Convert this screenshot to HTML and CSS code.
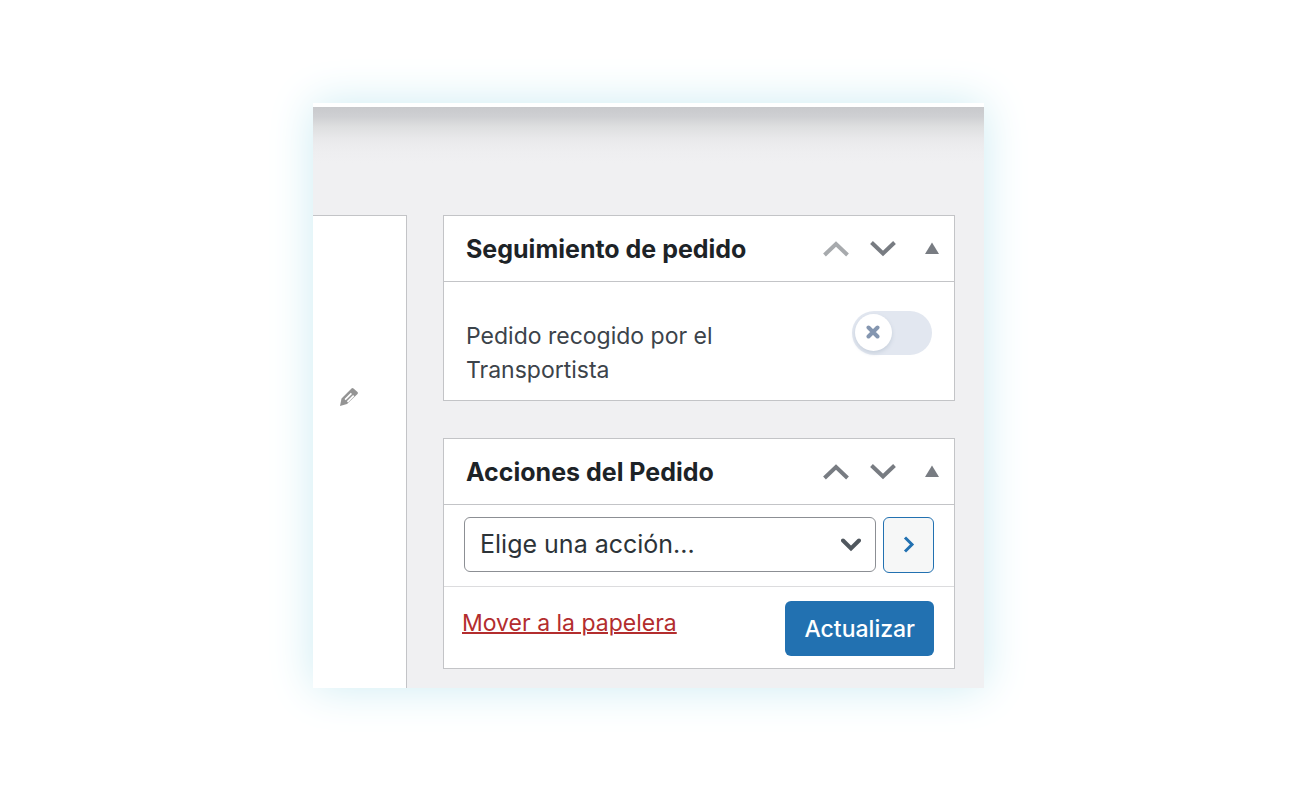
FILE: index.html
```html
<!DOCTYPE html>
<html lang="es">
<head>
<meta charset="utf-8">
<meta name="viewport" content="width=device-width, initial-scale=1">
<title>Pedido</title>
<link rel="stylesheet" href="styles.css">
</head>
<body>
<main class="frame">
  <div class="topbar"></div>
  <div class="columns">
    <section class="details" aria-label="Detalles">
      <button class="edit" type="button" aria-label="Editar">
        <svg width="20" height="20" viewBox="0 0 20 20"><path fill="#949494" fill-rule="evenodd" d="M12.500 1.500Q13.500 .5 14.500 1.500L18.500 5Q19.500 6 18.500 7L8 17L1 19L2.500 11.500ZM11.800 5.700L5.500 12L6.700 13.200L13 6.900ZM14.100 8L7.800 14.300L9 15.500L15.300 9.200Z"/></svg>
      </button>
    </section>
    <aside class="sidebar">
      <section class="panel">
        <header class="panel-header">
          <h2 class="title">Seguimiento de pedido</h2>
          <div class="tools">
            <button class="tool" type="button" aria-label="Subir" disabled><svg width="26" height="16" viewBox="0 0 26 16"><path class="arrow" d="M1.500 14L13 3L24.500 14"/></svg></button>
            <button class="tool" type="button" aria-label="Bajar"><svg width="26" height="16" viewBox="0 0 26 16"><path class="arrow" d="M1.500 1.500L13 12.500L24.500 1.500"/></svg></button>
            <button class="tool toggle" type="button" aria-label="Plegar"><svg width="14" height="14" viewBox="0 0 14 14"><path fill="#787c82" d="M7 .5L14 12H0Z"/></svg></button>
          </div>
        </header>
        <div class="tracking">
          <label class="tracking-label" for="picked">Pedido recogido por el Transportista</label>
          <div class="switch">
            <input class="switch-input" type="checkbox" id="picked">
            <svg class="switch-mark" width="14" height="14" viewBox="0 0 14 14"><path d="M2.500 2.500L11.500 11.500M11.500 2.500L2.500 11.500"/></svg>
          </div>
        </div>
      </section>
      <section class="panel">
        <header class="panel-header">
          <h2 class="title">Acciones del Pedido</h2>
          <div class="tools">
            <button class="tool" type="button" aria-label="Subir"><svg width="26" height="16" viewBox="0 0 26 16"><path class="arrow" d="M1.500 14L13 3L24.500 14"/></svg></button>
            <button class="tool" type="button" aria-label="Bajar"><svg width="26" height="16" viewBox="0 0 26 16"><path class="arrow" d="M1.500 1.500L13 12.500L24.500 1.500"/></svg></button>
            <button class="tool toggle" type="button" aria-label="Plegar"><svg width="14" height="14" viewBox="0 0 14 14"><path fill="#787c82" d="M7 .5L14 12H0Z"/></svg></button>
          </div>
        </header>
        <div class="actions">
          <div class="picker">
            <select class="select" aria-label="Acción"><option>Elige una acción...</option></select>
            <svg class="caret" width="20" height="14" viewBox="0 0 20 14"><path d="M2 2.500L10 10.500L18 2.500"/></svg>
          </div>
          <button class="go" type="button" aria-label="Aplicar"><svg width="12" height="18" viewBox="0 0 12 18"><path d="M2 1.500L9 8.500L2 15.500"/></svg></button>
        </div>
        <footer class="footer">
          <a class="trash" href="#">Mover a la papelera</a>
          <button class="save" type="submit">Actualizar</button>
        </footer>
      </section>
    </aside>
  </div>
</main>
</body>
</html>
```
FILE: styles.css
```css
* { box-sizing: border-box; }

body {
  margin: 0;
  padding: 103px 316px 104px 313px;
  background: #fff;
  font-family: Inter, "Liberation Sans", sans-serif;
  font-size: 23px;
  color: #3c434a;
}

button { font: inherit; cursor: pointer; }

svg { display: block; fill: none; }

.frame {
  display: flex;
  flex-direction: column;
  background: #f0f0f2;
  box-shadow: 0 0 42px #cdecf3;
}

.topbar {
  height: 4px;
  background: #fff;
}

.columns {
  display: grid;
  grid-template-columns: 94px minmax(0, 1fr);
  gap: 36px;
  padding: 108px 29px 0 0;
  background: linear-gradient(#c8c9cc, #cfd0d3 10px, #dedfe0 20px, #e9e9eb 32px, #eeeef0 44px, #f0f0f2 56px);
}

.details {
  display: flex;
  align-items: flex-start;
  padding: 171px 0 0 26px;
  background: #fff;
  border: 1px solid #c3c4c7;
  border-width: 1px 1px 0 0;
}

.edit {
  padding: 0;
  border: 0;
  background: none;
}

.sidebar {
  display: flex;
  flex-direction: column;
  gap: 37px;
  padding-bottom: 19px;
}

.panel {
  background: #fff;
  border: 1px solid #c3c4c7;
}

.panel-header {
  display: flex;
  align-items: center;
  justify-content: space-between;
  height: 66px;
  padding: 0 15px 0 22px;
  border-bottom: 1px solid #c3c4c7;
}

.title {
  margin: 0;
  font-size: 25px;
  line-height: 32px;
  font-weight: 700;
  color: #1d2327;
}

.tools {
  display: flex;
  align-items: center;
  gap: 21px;
}

.tool {
  padding: 0;
  border: 0;
  background: none;
}

.toggle { padding: 0 0 0 8px; }

.arrow { stroke: #787c82; stroke-width: 4; }

.tool:disabled .arrow { stroke: #a7aaad; }

.tracking {
  display: flex;
  align-items: flex-start;
  justify-content: space-between;
  padding: 29px 22px 13px;
}

.tracking-label {
  width: 270px;
  padding-top: 8px;
  line-height: 34px;
}

.switch {
  position: relative;
  display: flex;
}

.switch-input {
  appearance: none;
  width: 80px;
  height: 44px;
  margin: 0;
  padding: 3px;
  border-radius: 22px;
  background: #e2e7f0;
}

.switch-input::before {
  content: "";
  display: block;
  width: 37px;
  height: 37px;
  border-radius: 50%;
  background: #fff;
  box-shadow: 0 2px 4px #c6cfdb;
}

.switch-mark {
  position: absolute;
  left: 14px;
  top: 14px;
  stroke: #8496b0;
  stroke-width: 4;
  stroke-linecap: round;
  pointer-events: none;
}

.actions {
  display: flex;
  gap: 7px;
  padding: 12px 20px 13px;
  border-bottom: 1px solid #dcdcde;
}

.picker {
  position: relative;
  flex: 1;
}

.select {
  appearance: none;
  width: 100%;
  height: 55px;
  padding: 0 48px 2px 15px;
  border: 1px solid #8c8f94;
  border-radius: 6px;
  background: #fff;
  font: inherit;
  font-size: 25px;
  color: #2c3338;
}

.caret {
  position: absolute;
  right: 15px;
  top: 21px;
  stroke: #50575e;
  stroke-width: 4;
  stroke-linecap: round;
  pointer-events: none;
}

.go {
  display: grid;
  place-items: center;
  width: 51px;
  height: 56px;
  padding: 0;
  border: 1px solid #2271b1;
  border-radius: 6px;
  background: #f6f7f7;
  stroke: #2271b1;
  stroke-width: 3;
}

.footer {
  display: flex;
  align-items: flex-start;
  justify-content: space-between;
  padding: 14px 20px 12px 18px;
}

.trash {
  padding-top: 6px;
  line-height: 32px;
  color: #b32d2e;
  text-decoration-thickness: 2px;
}

.save {
  height: 55px;
  padding: 0 19px;
  border: 0;
  border-radius: 6px;
  background: #2271b1;
  color: #fff;
  font-weight: 500;
}
```
